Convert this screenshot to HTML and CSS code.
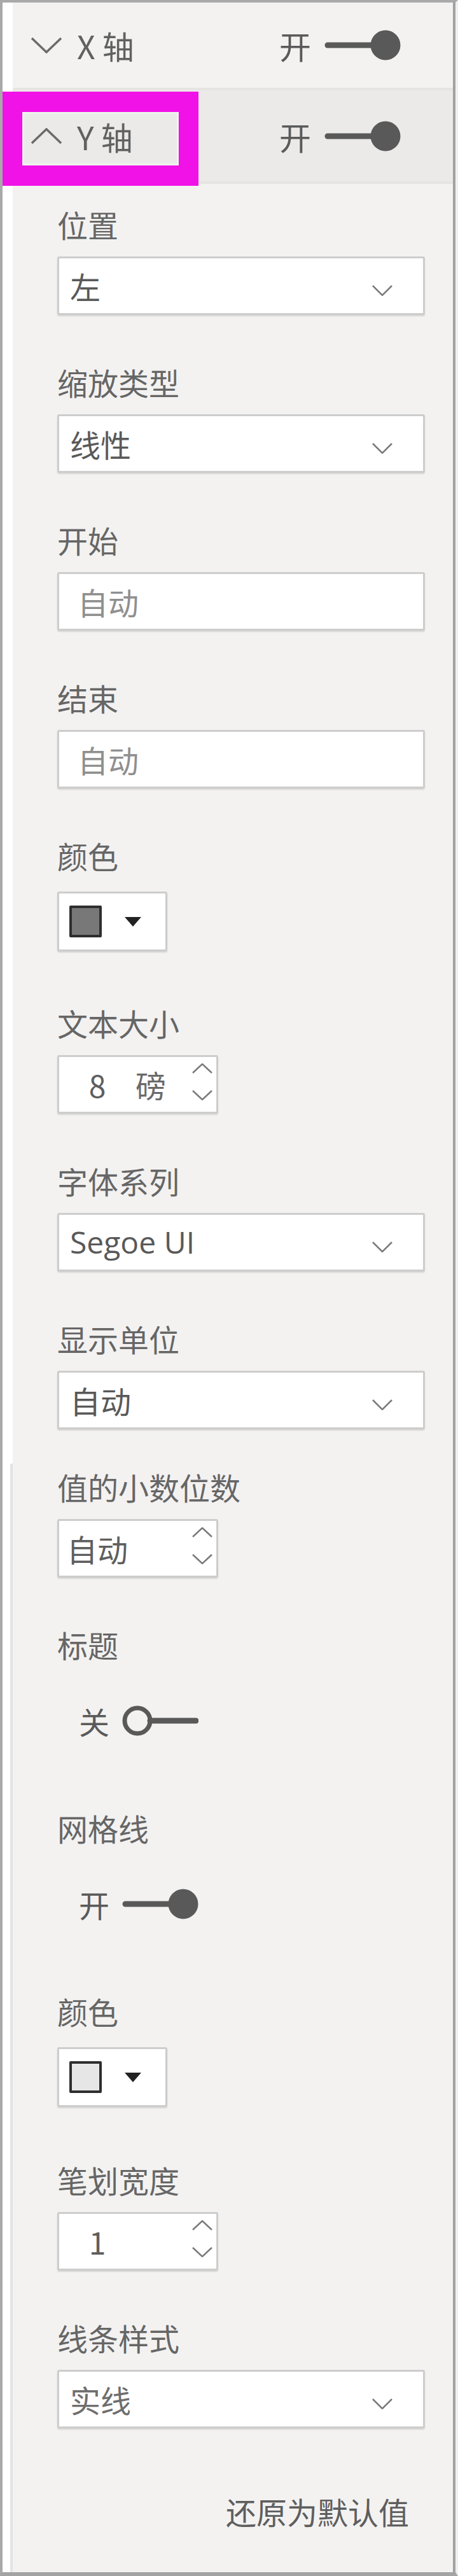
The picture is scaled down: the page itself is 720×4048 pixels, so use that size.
FILE: index.html
```html
<!DOCTYPE html>
<html lang="zh-CN">
<head>
<meta charset="utf-8">
<title>Y 轴格式设置</title>
<link rel="stylesheet" href="styles.css">
</head>
<body>
<div class="frame">
  <div class="gutter">
    <div class="gutter-top"></div>
    <div class="gutter-bottom"></div>
  </div>
  <div class="pane">
    <div class="card-head">
      <svg class="caret" viewBox="0 0 50 26"><polyline points="2,2 25,24 48,2"/></svg>
      <span class="card-title">X 轴</span>
      <div class="toggle head-toggle">
        <span class="toggle-text">开</span>
        <svg class="switch" viewBox="0 0 120 48"><line x1="5" y1="24" x2="96" y2="24"/><circle cx="96" cy="24" r="23.5"/></svg>
      </div>
    </div>
    <div class="card-head is-open">
      <svg class="caret" viewBox="0 0 50 26"><polyline points="2,24 25,2 48,24"/></svg>
      <span class="card-title">Y 轴</span>
      <div class="toggle head-toggle">
        <span class="toggle-text">开</span>
        <svg class="switch" viewBox="0 0 120 48"><line x1="5" y1="24" x2="96" y2="24"/><circle cx="96" cy="24" r="23.5"/></svg>
      </div>
    </div>

    <div class="card-body">
      <div class="field">
        <div class="label">位置</div>
        <div class="box select"><span class="value">左</span><svg class="chev" viewBox="0 0 32 17"><polyline points="1,1 16,16 31,1"/></svg></div>
      </div>
      <div class="field">
        <div class="label">缩放类型</div>
        <div class="box select"><span class="value">线性</span><svg class="chev" viewBox="0 0 32 17"><polyline points="1,1 16,16 31,1"/></svg></div>
      </div>
      <div class="field">
        <div class="label">开始</div>
        <div class="box text-input"><span class="placeholder">自动</span></div>
      </div>
      <div class="field">
        <div class="label">结束</div>
        <div class="box text-input"><span class="placeholder">自动</span></div>
      </div>
      <div class="field color-field">
        <div class="label">颜色</div>
        <div class="box picker"><span class="swatch swatch-dark"></span><span class="tri"></span></div>
      </div>
      <div class="field">
        <div class="label">文本大小</div>
        <div class="box spin">
          <span class="spin-value">8</span><span class="spin-unit">磅</span>
          <span class="arrows">
            <svg viewBox="0 0 32 16"><polyline points="1,15 16,1 31,15"/></svg>
            <svg viewBox="0 0 32 16"><polyline points="1,1 16,15 31,1"/></svg>
          </span>
        </div>
      </div>
      <div class="field">
        <div class="label">字体系列</div>
        <div class="box select"><span class="value latin">Segoe UI</span><svg class="chev" viewBox="0 0 32 17"><polyline points="1,1 16,16 31,1"/></svg></div>
      </div>
      <div class="field tight">
        <div class="label">显示单位</div>
        <div class="box select"><span class="value">自动</span><svg class="chev" viewBox="0 0 32 17"><polyline points="1,1 16,16 31,1"/></svg></div>
      </div>
      <div class="field">
        <div class="label">值的小数位数</div>
        <div class="box spin">
          <span class="spin-value">自动</span><span class="spin-unit"></span>
          <span class="arrows">
            <svg viewBox="0 0 32 16"><polyline points="1,15 16,1 31,15"/></svg>
            <svg viewBox="0 0 32 16"><polyline points="1,1 16,15 31,1"/></svg>
          </span>
        </div>
      </div>
      <div class="field toggle-field">
        <div class="label">标题</div>
        <div class="toggle body-toggle">
          <span class="toggle-text">关</span>
          <svg class="switch off" viewBox="0 0 120 48"><circle cx="24" cy="24" r="20"/><line x1="44" y1="24" x2="116" y2="24"/></svg>
        </div>
      </div>
      <div class="field toggle-field">
        <div class="label">网格线</div>
        <div class="toggle body-toggle">
          <span class="toggle-text">开</span>
          <svg class="switch" viewBox="0 0 120 48"><line x1="5" y1="24" x2="96" y2="24"/><circle cx="96" cy="24" r="23.5"/></svg>
        </div>
      </div>
      <div class="field color-field last-color">
        <div class="label">颜色</div>
        <div class="box picker"><span class="swatch swatch-light"></span><span class="tri"></span></div>
      </div>
      <div class="field">
        <div class="label">笔划宽度</div>
        <div class="box spin">
          <span class="spin-value">1</span><span class="spin-unit"></span>
          <span class="arrows">
            <svg viewBox="0 0 32 16"><polyline points="1,15 16,1 31,15"/></svg>
            <svg viewBox="0 0 32 16"><polyline points="1,1 16,15 31,1"/></svg>
          </span>
        </div>
      </div>
      <div class="field no-gap">
        <div class="label">线条样式</div>
        <div class="box select"><span class="value muted">实线</span><svg class="chev" viewBox="0 0 32 17"><polyline points="1,1 16,16 31,1"/></svg></div>
      </div>
      <div class="reset">还原为默认值</div>
    </div>
  </div>
  <div class="callout"></div>
</div>
</body>
</html>
```

FILE: styles.css
```css
html, body {
  margin: 0;
  padding: 0;
  background: #ffffff;
}

body {
  font-family: "Noto Sans CJK SC", "Noto Sans", sans-serif;
  color: #605e5c;
}

.frame {
  position: relative;
  width: 720px;
  height: 4048px;
  box-sizing: border-box;
  display: flex;
  border-top: 4px solid #a9a9a9;
  border-left: 4px solid #a9a9a9;
  border-bottom: 6px solid #a3a3a3;
  border-right: 4px solid #efefef;
  background: #ffffff;
}

.gutter {
  width: 16px;
  flex: 0 0 16px;
  display: flex;
  flex-direction: column;
}

.gutter-top {
  height: 2296px;
  background: #ffffff;
}

.gutter-bottom {
  flex: 1;
  box-sizing: border-box;
  background: #ffffff;
  border-right: 4px solid #e3e3e3;
}

.pane {
  flex: 1;
  display: flex;
  flex-direction: column;
  background: #f3f2f1;
  border-right: 4px solid #a2a2a2;
}

/* ---------- card headers ---------- */
.card-head {
  height: 134px;
  display: flex;
  align-items: center;
  padding: 0 82px 0 28px;
  border-bottom: 4px solid #e6e4e2;
  background: #f3f2f1;
}

.card-head.is-open {
  height: 143px;
  background: #ebeae9;
}

.caret {
  width: 50px;
  height: 26px;
  flex: 0 0 50px;
}

.caret polyline {
  fill: none;
  stroke: #6b6b6b;
  stroke-width: 3.5;
}

.card-title {
  margin-left: 23px;
  font-size: 50px;
  line-height: 60px;
  color: #616161;
}

.toggle {
  display: flex;
  align-items: center;
  gap: 21px;
}

.head-toggle {
  margin-left: auto;
}

.toggle-text {
  font-size: 50px;
  line-height: 60px;
  color: #5a5a5a;
}

.switch {
  width: 120px;
  height: 48px;
  flex: 0 0 120px;
}

.switch line {
  stroke: #595959;
  stroke-width: 9;
  stroke-linecap: round;
}

.switch circle {
  fill: #595959;
}

.switch.off circle {
  fill: none;
  stroke: #595959;
  stroke-width: 7;
}

/* ---------- body ---------- */
.card-body {
  padding: 33px 44px 0 70px;
  display: flex;
  flex-direction: column;
}

.field {
  display: flex;
  flex-direction: column;
  align-items: flex-start;
  margin-bottom: 75px;
}

.field.tight {
  margin-bottom: 60px;
}

.field.no-gap {
  margin-bottom: 0;
}

.label {
  height: 60px;
  line-height: 60px;
  font-size: 48px;
  color: #666666;
  white-space: nowrap;
}

.box {
  margin-top: 21px;
  box-sizing: border-box;
  height: 92px;
  background: #ffffff;
  border: 3px solid #cdcdcd;
  border-radius: 3px;
  box-shadow: 0 2px 2px rgba(0, 0, 0, 0.12);
  display: flex;
  align-items: center;
}

.select {
  width: 100%;
  padding: 0 48px 0 17px;
  justify-content: space-between;
}

.value {
  font-size: 48px;
  line-height: 60px;
  color: #595959;
}

.value.latin {
  font-family: "Open Sans", "Noto Sans", sans-serif;
}

.value.muted {
  color: #6e6e6e;
}

.chev {
  width: 32px;
  height: 17px;
  margin-top: 14px;
}

.chev polyline,
.arrows polyline {
  fill: none;
  stroke: #7a7a7a;
  stroke-width: 2.5;
}

.text-input {
  width: 100%;
  padding: 0 0 0 29px;
}

.placeholder {
  font-size: 48px;
  line-height: 60px;
  color: #8f8f8f;
}

/* colour picker */
.color-field {
  margin-bottom: 82px;
}

.color-field.last-color {
  margin-bottom: 84px;
}

.picker {
  margin-top: 27px;
  width: 173px;
  height: 94px;
  padding: 0 0 0 16px;
}

.swatch {
  box-sizing: border-box;
  width: 51px;
  height: 50px;
  border: 4px solid #2e2e2e;
  border-radius: 2px;
}

.swatch-dark {
  background: #787878;
}

.swatch-light {
  background: #e6e6e6;
}

.tri {
  margin-left: 36px;
  width: 0;
  height: 0;
  border-left: 13px solid transparent;
  border-right: 13px solid transparent;
  border-top: 15px solid #222222;
}

/* spinner */
.spin {
  width: 253px;
  padding: 0 6px 0 0;
}

.spin-value {
  width: 120px;
  text-align: center;
  font-size: 48px;
  line-height: 60px;
  color: #5e5e5e;
}

.spin-unit {
  font-size: 48px;
  line-height: 60px;
  color: #6a6a6a;
}

.arrows {
  margin-left: auto;
  align-self: stretch;
  display: flex;
  flex-direction: column;
  padding-top: 10px;
  gap: 26px;
}

.arrows svg {
  width: 32px;
  height: 16px;
}

/* toggles in body */
.toggle-field {
  margin-bottom: 108px;
}

.body-toggle {
  margin-top: 60px;
  height: 60px;
  padding-left: 34px;
  gap: 20px;
}

.body-toggle .toggle-text {
  font-size: 48px;
}

.reset {
  margin-top: 100px;
  align-self: flex-end;
  margin-right: 25px;
  font-size: 48px;
  line-height: 60px;
  color: #5e5e5e;
}

/* annotation overlay */
.callout {
  position: absolute;
  left: 0;
  top: 140px;
  width: 308px;
  height: 148px;
  box-sizing: border-box;
  border: 31px solid #f012e6;
  border-top-width: 32px;
  border-bottom-width: 32px;
  box-shadow: inset 0 0 0 3px #eef5ec;
}
```
